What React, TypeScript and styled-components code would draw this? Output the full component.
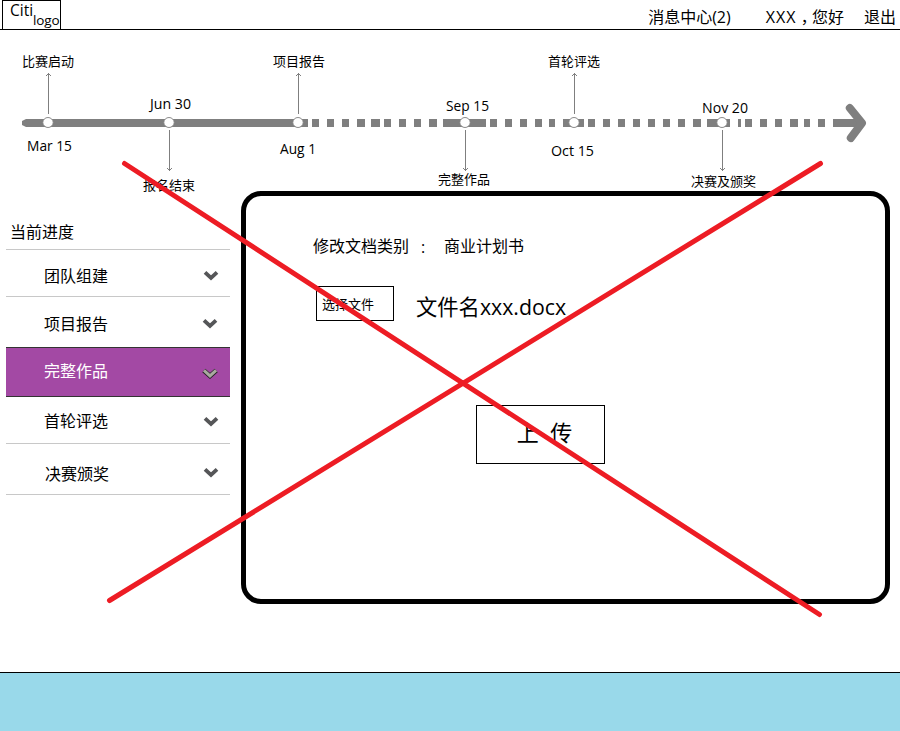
import React from "react";
import styled, { createGlobalStyle } from "styled-components";

const GlobalStyle = createGlobalStyle`
  * { box-sizing: border-box; }
  body {
    margin: 0;
    background: #fff;
    color: #000;
    font-family: "Open Sans", "Noto Sans CJK SC", sans-serif;
    font-size: 16px;
  }
`;

const Page = styled.div`
  position: relative;
  display: flex;
  flex-direction: column;
  width: 900px;
  height: 731px;
  overflow: hidden;
`;

const Header = styled.header`
  display: flex;
  justify-content: space-between;
  height: 30px;
  padding-left: 2px;
  border-bottom: 1px solid #000;
`;

const Logo = styled.div`
  display: flex;
  width: 59px;
  height: 29px;
  padding-left: 7px;
  border: 1px solid #000;
  border-bottom: 0;
  white-space: nowrap;
`;

const LogoName = styled.span`
  width: 23px;
  font-size: 15.5px;
  line-height: 19px;
`;

const LogoSuffix = styled.span`
  padding-top: 9px;
  font-size: 13.5px;
  line-height: 20px;
  letter-spacing: -0.1px;
`;

const UserNav = styled.nav`
  display: flex;
  height: 29px;
  padding: 6px 4px 0 0;
  line-height: 23px;
  white-space: nowrap;
`;

const NavItem = styled.span<{ $gap: number }>`
  display: flex;
  margin-left: ${(p) => p.$gap}px;
`;

const UserName = styled.span`
  letter-spacing: 1px;
`;

const Comma = styled.span`
  width: 15.5px;
  padding: 4px 0 0 0;
  font-family: "Noto Sans CJK TC", sans-serif;
`;

const TimelineSection = styled.section`
  height: 161px;

  svg {
    display: block;
  }
`;

const StageText = styled.text`
  font-size: 13px;
`;

const DateText = styled.text`
  font-size: 13.6px;
`;

const Main = styled.main`
  display: grid;
  grid-template-columns: 224px 649px;
  column-gap: 11px;
  height: 481px;
  padding-left: 6px;
  align-items: start;
`;

const Sidebar = styled.aside`
  display: flex;
  flex-direction: column;
`;

const SidebarTitle = styled.h2`
  height: 59px;
  margin: 0;
  padding: 29px 0 0 4px;
  border-bottom: 1px solid #c8c8c8;
  font-size: 16px;
  font-weight: 400;
  line-height: 24px;
`;

const StageRow = styled.div<{ $height: number; $active?: boolean }>`
  display: flex;
  justify-content: space-between;
  align-items: flex-start;
  height: ${(p) => p.$height}px;
  padding: 0 11px 0 38px;
  border-top: ${(p) => (p.$active ? "1px solid #333" : "0")};
  border-bottom: ${(p) => (p.$active ? "1px solid #333" : p.$height === 50 ? "0" : "1px solid #c8c8c8")};
  background: ${(p) => (p.$active ? "#a349a4" : "transparent")};
  color: ${(p) => (p.$active ? "#fff" : "#000")};
`;

const StageName = styled.span<{ $top: number; $indent?: number }>`
  padding: ${(p) => p.$top}px 0 0 ${(p) => p.$indent ?? 0}px;
  line-height: 24px;
`;

const Chevron = styled.svg<{ $top: number; $shift: number }>`
  flex: none;
  margin: ${(p) => p.$top}px ${(p) => p.$shift}px 0 0;
`;

const Panel = styled.section`
  height: 413px;
  padding: 38px 0 0 67px;
  border: 5px solid #000;
  border-radius: 20px;
`;

const CategoryRow = styled.div`
  display: flex;
  height: 24px;
  line-height: 24px;
`;

const CategoryLabel = styled.span`
  width: 96px;
`;

const Colon = styled.span`
  width: 35px;
  padding: 1px 0 0 12px;
`;

const FileRow = styled.div`
  display: flex;
  gap: 22px;
  margin: 28px 0 0 3px;
`;

const ChooseButton = styled.button`
  width: 78px;
  height: 35px;
  padding: 1px 0 0 5px;
  border: 1px solid #000;
  background: #fff;
  color: #000;
  font: inherit;
  font-size: 13px;
  line-height: 20px;
  text-align: left;
`;

const FileName = styled.span`
  height: 35px;
  font-size: 21.3px;
  line-height: 41px;
`;

const UploadButton = styled.button`
  display: block;
  width: 129px;
  height: 59px;
  margin: 84px 0 0 163px;
  padding: 0 0 5px 8px;
  border: 1px solid #000;
  background: #fff;
  color: #000;
  font: inherit;
  font-size: 22px;
  line-height: 30px;
  white-space: pre;
`;

const Footer = styled.footer`
  height: 59px;
  border-top: 1px solid #000;
  background: #99d9ea;
`;

const StrikeOverlay = styled.svg`
  position: absolute;
  inset: 0;
  pointer-events: none;
`;

interface Milestone {
  x: number;
  up: boolean;
  name: string;
  nameX: number;
  nameY: number;
  nameW: number;
  date: string;
  dateX: number;
  dateY: number;
  dateW: number;
}

const milestones: Milestone[] = [
  { x: 48, up: true, name: "比赛启动", nameX: 22, nameY: 66.4, nameW: 52, date: "Mar 15", dateX: 27, dateY: 151, dateW: 45 },
  { x: 169, up: false, name: "报名结束", nameX: 143, nameY: 190, nameW: 52, date: "Jun 30", dateX: 150, dateY: 109, dateW: 41 },
  { x: 298, up: true, name: "项目报告", nameX: 273, nameY: 66.4, nameW: 52, date: "Aug 1", dateX: 280, dateY: 154, dateW: 36 },
  { x: 465, up: false, name: "完整作品", nameX: 438, nameY: 184.4, nameW: 52, date: "Sep 15", dateX: 446, dateY: 111, dateW: 43 },
  { x: 574, up: true, name: "首轮评选", nameX: 548, nameY: 66.4, nameW: 52, date: "Oct 15", dateX: 551, dateY: 156, dateW: 43 },
  { x: 722, up: false, name: "决赛及颁奖", nameX: 691, nameY: 186.4, nameW: 65, date: "Nov 20", dateX: 702, dateY: 113, dateW: 46 },
];

const dashes: [number, number][] = [
  [298, 308], [312, 319], [327, 334], [342, 349], [357, 365], [371, 380], [384, 391], [399, 406],
  [414, 421], [429, 437], [443, 486], [490, 497], [505, 512], [520, 527], [535, 542], [549, 555],
  [563, 584], [588, 595], [603, 610], [618, 625], [633, 640], [648, 655], [663, 670], [678, 685],
  [693, 701], [707, 730], [738, 741], [745, 752], [760, 767], [775, 782], [790, 798], [804, 810],
  [818, 825], [833, 860],
];

const stages = [
  { name: "团队组建", height: 47, top: 14, icon: 19, shift: 0 },
  { name: "项目报告", height: 50, top: 15, icon: 20, shift: 1 },
  { name: "完整作品", height: 50, top: 11, icon: 19, shift: 1, active: true },
  { name: "首轮评选", height: 47, top: 12, icon: 18, shift: 0 },
  { name: "决赛颁奖", height: 51, top: 18, icon: 22, shift: 0, indent: 1 },
];

function Timeline() {
  return (
    <TimelineSection>
      <svg width="900" height="161" viewBox="0 30 900 161" overflow="visible">
        <path d="M26 119H298V127H26L22 125V121Z" fill="#7f7f7f" />
        {dashes.map(([from, to]) => (
          <rect key={from} x={from} y="119" width={to - from} height="8" fill="#7f7f7f" />
        ))}
        <path
          d="M849.8 108 862 123 850.8 138"
          fill="none"
          stroke="#7f7f7f"
          strokeWidth="8"
          strokeLinecap="round"
          strokeLinejoin="round"
        />
        {milestones.map((m) => {
          const stem = m.x + 0.5;
          return (
            <g key={m.name}>
              <path
                d={
                  m.up
                    ? `M${stem} 114V73M${stem - 2.5} 76L${stem} 73.5L${stem + 2.5} 76`
                    : `M${stem} 130V171M${stem - 2.5} 168L${stem} 170.5L${stem + 2.5} 168`
                }
                fill="none"
                stroke="#7f7f7f"
              />
              <ellipse cx={m.x} cy="122.5" rx="5.2" ry="5" fill="#fff" stroke="#7f7f7f" strokeWidth="0.9" />
              <StageText x={m.nameX} y={m.nameY} textLength={m.nameW}>{m.name}</StageText>
              <DateText x={m.dateX} y={m.dateY} textLength={m.dateW} lengthAdjust="spacingAndGlyphs">
                {m.date}
              </DateText>
            </g>
          );
        })}
      </svg>
    </TimelineSection>
  );
}

export default function App() {
  return (
    <>
      <GlobalStyle />
      <Page>
        <Header>
          <Logo>
            <LogoName>Citi</LogoName>
            <LogoSuffix>logo</LogoSuffix>
          </Logo>
          <UserNav>
            <NavItem $gap={0}>消息中心(2)</NavItem>
            <NavItem $gap={35}>
              <UserName>XXX</UserName>
              <Comma lang="zh-TW">，</Comma>
              <span>您好</span>
            </NavItem>
            <NavItem $gap={20}>退出</NavItem>
          </UserNav>
        </Header>
        <Timeline />
        <Main>
          <Sidebar>
            <SidebarTitle>当前进度</SidebarTitle>
            {stages.map((s) => (
              <StageRow key={s.name} $height={s.height} $active={s.active}>
                <StageName $top={s.top} $indent={s.indent}>{s.name}</StageName>
                <Chevron $top={s.icon} $shift={s.shift} width="16" height="12" viewBox="0 0 16 12">
                  {s.active && <path d="M1.800 3.500 8 9 14.200 3.500" fill="none" stroke="#222" strokeWidth="4.6" />}
                  <path
                    d="M2 3.300 8 8.900 14 3.300"
                    fill="none"
                    stroke={s.active ? "#a9aaa0" : "#555658"}
                    strokeWidth={s.active ? 3 : 3.8}
                  />
                </Chevron>
              </StageRow>
            ))}
          </Sidebar>
          <Panel>
            <CategoryRow>
              <CategoryLabel>修改文档类别</CategoryLabel>
              <Colon>:</Colon>
              <span>商业计划书</span>
            </CategoryRow>
            <FileRow>
              <ChooseButton>选择文件</ChooseButton>
              <FileName>文件名xxx.docx</FileName>
            </FileRow>
            <UploadButton>上  传</UploadButton>
          </Panel>
        </Main>
        <Footer />
        <StrikeOverlay width="900" height="731" viewBox="0 0 900 731">
          <path
            d="M124.500 163.500 819.500 614.500M820.500 163.500 109.500 600.500"
            fill="none"
            stroke="#ed1c24"
            strokeWidth="5"
            strokeLinecap="round"
          />
        </StrikeOverlay>
      </Page>
    </>
  );
}
